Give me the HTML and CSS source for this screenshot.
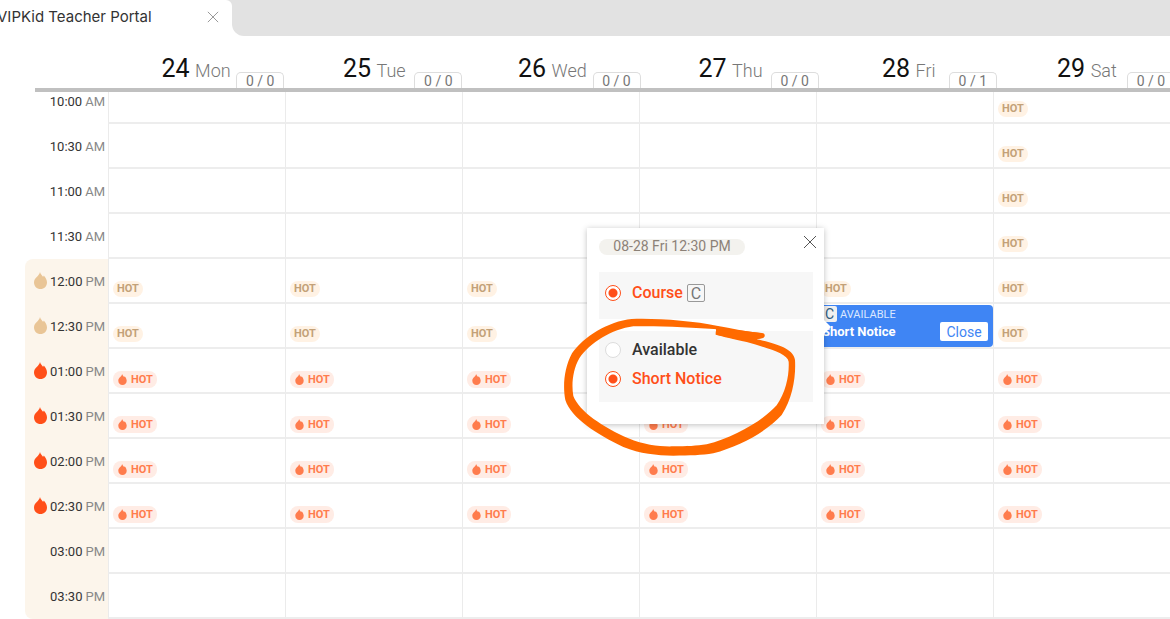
FILE: index.html
```
<!DOCTYPE html>
<html lang="en">
<head>
    <meta charset="UTF-8">
    <meta name="viewport" content="width=device-width, initial-scale=1.0">
    <title>VIPKid Teacher Portal</title>
    <link rel="stylesheet" href="styles.css">
</head>
<body>

    <svg class="symbols" aria-hidden="true">
        <symbol id="flame" viewBox="0 0 13 17">
            <path d="M6 0C6.3 1.6 7.6 2.8 9 4.8C9.5 4.4 9.7 4 9.8 3.4C11.8 5.6 13 8 13 10.5C13 14.3 10.2 17 6.5 17S0 14.3 0 10.5C0 8 1.2 6.6 3 4.8C4.4 3.4 5.5 2 6 0Z"/>
        </symbol>
        <symbol id="cross" viewBox="0 0 14 14">
            <path d="M1 1L13 13M13 1L1 13" fill="none" stroke="currentColor"/>
        </symbol>
    </svg>

    <div class="tab-bar">
        <div class="tab">
            <a href="#">VIPKid Teacher Portal</a>
            <button class="tab-close" aria-label="Close tab"><svg><use href="#cross"/></svg></button>
        </div>
        <div class="tab-strip"></div>
    </div>

    <div class="days">
        <div class="day"><b>24</b> <span>Mon</span><em>0 / 0</em></div>
        <div class="day"><b>25</b> <span>Tue</span><em>0 / 0</em></div>
        <div class="day"><b>26</b> <span>Wed</span><em>0 / 0</em></div>
        <div class="day"><b>27</b> <span>Thu</span><em>0 / 0</em></div>
        <div class="day"><b>28</b> <span>Fri</span><em>0 / 1</em></div>
        <div class="day"><b>29</b> <span>Sat</span><em>0 / 0</em></div>
    </div>

    <table class="calendar">
        <tbody>
            <tr>
                <th scope="row"><div class="time">10:00 <span>AM</span></div></th>
                <td></td><td></td><td></td><td></td><td></td>
                <td><span class="hot">HOT</span></td>
            </tr>
            <tr>
                <th scope="row"><div class="time">10:30 <span>AM</span></div></th>
                <td></td><td></td><td></td><td></td><td></td>
                <td><span class="hot">HOT</span></td>
            </tr>
            <tr>
                <th scope="row"><div class="time">11:00 <span>AM</span></div></th>
                <td></td><td></td><td></td><td></td><td></td>
                <td><span class="hot">HOT</span></td>
            </tr>
            <tr>
                <th scope="row"><div class="time">11:30 <span>AM</span></div></th>
                <td></td><td></td><td></td><td></td><td></td>
                <td><span class="hot">HOT</span></td>
            </tr>
            <!-- peak hours -->
            <tr class="peak peak-first">
                <th scope="row"><div class="time"><svg class="warm"><use href="#flame"/></svg>12:00 <span>PM</span></div></th>
                <td><span class="hot">HOT</span></td>
                <td><span class="hot">HOT</span></td>
                <td><span class="hot">HOT</span></td>
                <td></td>
                <td><span class="hot">HOT</span></td>
                <td><span class="hot">HOT</span></td>
            </tr>
            <tr class="peak">
                <th scope="row"><div class="time"><svg class="warm"><use href="#flame"/></svg>12:30 <span>PM</span></div></th>
                <td><span class="hot">HOT</span></td>
                <td><span class="hot">HOT</span></td>
                <td><span class="hot">HOT</span></td>
                <td></td>
                <td class="booked">
                    <div class="event">
                        <div class="event-status"><i>C</i> AVAILABLE</div>
                        <div class="event-row">
                            <strong>Short Notice</strong>
                            <button class="event-close">Close</button>
                        </div>
                    </div>

                    <div class="popover">
                        <div class="popover-head">
                            <span class="slot"><span>08-28 Fri 12:30 PM</span></span>
                            <button class="popover-close" aria-label="Close"><svg><use href="#cross"/></svg></button>
                        </div>
                        <div class="options">
                            <label><input type="radio" name="type" checked>Course <i>C</i></label>
                        </div>
                        <div class="options options-status">
                            <label><input type="radio" name="status">Available</label>
                            <label><input type="radio" name="status" checked>Short Notice</label>
                        </div>
                        <svg class="marker" viewBox="30 15 720 432" aria-hidden="true">
                            <path fill-rule="evenodd" d="M500 47C430 33 320 24 245 27C175 34 100 80 66 130C42 175 38 230 46 270C64 325 140 372 220 411C270 432 320 436 370 437C420 437 455 436 490 430C570 408 650 365 695 315C728 265 738 200 735 150C732 120 690 102 620 88L636 85C647 83 647 69 636 69C590 66 545 54 500 47Z
                                M497 74C497 60 500 58 503 58C430 52 320 47 250 49C185 58 120 98 88 145C68 180 64 225 70 258C88 305 160 352 235 385C285 406 330 410 370 409C410 409 440 408 470 403C550 382 635 335 680 286C708 245 718 195 716 155C712 130 650 114 590 96C550 87 520 80 497 74Z"/>
                            <path d="M497 56L503 75L590 94L636 84V70L560 60Z"/>
                        </svg>
                    </div>
                </td>
                <td><span class="hot">HOT</span></td>
            </tr>
            <tr class="peak">
                <th scope="row"><div class="time"><svg><use href="#flame"/></svg>01:00 <span>PM</span></div></th>
                <td><span class="hot fire"><svg><use href="#flame"/></svg>HOT</span></td>
                <td><span class="hot fire"><svg><use href="#flame"/></svg>HOT</span></td>
                <td><span class="hot fire"><svg><use href="#flame"/></svg>HOT</span></td>
                <td></td>
                <td><span class="hot fire"><svg><use href="#flame"/></svg>HOT</span></td>
                <td><span class="hot fire"><svg><use href="#flame"/></svg>HOT</span></td>
            </tr>
            <tr class="peak">
                <th scope="row"><div class="time"><svg><use href="#flame"/></svg>01:30 <span>PM</span></div></th>
                <td><span class="hot fire"><svg><use href="#flame"/></svg>HOT</span></td>
                <td><span class="hot fire"><svg><use href="#flame"/></svg>HOT</span></td>
                <td><span class="hot fire"><svg><use href="#flame"/></svg>HOT</span></td>
                <td><span class="hot fire"><svg><use href="#flame"/></svg>HOT</span></td>
                <td><span class="hot fire"><svg><use href="#flame"/></svg>HOT</span></td>
                <td><span class="hot fire"><svg><use href="#flame"/></svg>HOT</span></td>
            </tr>
            <tr class="peak">
                <th scope="row"><div class="time"><svg><use href="#flame"/></svg>02:00 <span>PM</span></div></th>
                <td><span class="hot fire"><svg><use href="#flame"/></svg>HOT</span></td>
                <td><span class="hot fire"><svg><use href="#flame"/></svg>HOT</span></td>
                <td><span class="hot fire"><svg><use href="#flame"/></svg>HOT</span></td>
                <td><span class="hot fire"><svg><use href="#flame"/></svg>HOT</span></td>
                <td><span class="hot fire"><svg><use href="#flame"/></svg>HOT</span></td>
                <td><span class="hot fire"><svg><use href="#flame"/></svg>HOT</span></td>
            </tr>
            <tr class="peak">
                <th scope="row"><div class="time"><svg><use href="#flame"/></svg>02:30 <span>PM</span></div></th>
                <td><span class="hot fire"><svg><use href="#flame"/></svg>HOT</span></td>
                <td><span class="hot fire"><svg><use href="#flame"/></svg>HOT</span></td>
                <td><span class="hot fire"><svg><use href="#flame"/></svg>HOT</span></td>
                <td><span class="hot fire"><svg><use href="#flame"/></svg>HOT</span></td>
                <td><span class="hot fire"><svg><use href="#flame"/></svg>HOT</span></td>
                <td><span class="hot fire"><svg><use href="#flame"/></svg>HOT</span></td>
            </tr>
            <tr class="peak">
                <th scope="row"><div class="time">03:00 <span>PM</span></div></th>
                <td></td><td></td><td></td><td></td><td></td><td></td>
            </tr>
            <tr class="peak peak-last">
                <th scope="row"><div class="time">03:30 <span>PM</span></div></th>
                <td></td><td></td><td></td><td></td><td></td><td></td>
            </tr>
        </tbody>
    </table>

</body>
</html>
```
FILE: styles.css
```
* {
    box-sizing: border-box;
}

body {
    margin: 0;
    font-family: Roboto, "Liberation Sans", sans-serif;
    font-size: 14px;
    color: #333;
    background: #fff;
    overflow-x: hidden;
}

button {
    font-family: inherit;
    border: none;
    background: none;
    padding: 0;
    cursor: pointer;
}

svg {
    display: block;
    fill: currentColor;
}

.symbols {
    display: none;
}

/* browser tab */
.tab-bar {
    display: flex;
    height: 36px;
    background: linear-gradient(#e2e2e2 50%, #fff 50%);
}

.tab {
    width: 232px;
    display: flex;
    align-items: center;
    justify-content: space-between;
    padding: 0 13px 3px 0;
    background: #fff;
    border-top-right-radius: 6px;
}

.tab a {
    margin-left: -3px;
    font-family: Inter, sans-serif;
    font-size: 15px;
    color: #333;
    text-decoration: none;
    white-space: nowrap;
}

.tab-close {
    color: #888;
}

.tab-close svg {
    width: 12px;
    height: 12px;
}

.tab-strip {
    flex: 1;
    background: #e2e2e2;
    border-bottom-left-radius: 12px;
}

/* day names */
.days {
    position: relative;
    z-index: 1;
    display: grid;
    grid-template-columns: repeat(6, 1fr);
    height: 56px;
    margin: 0 -6px 0 35px;
    padding-left: 72px;
    border-bottom: 4px solid #c0c0c0;
    background: #fff;
}

.day {
    position: relative;
    padding-top: 17px;
    text-align: center;
    line-height: 32px;
}

.day b {
    margin-right: 2px;
    font-size: 25px;
    font-weight: 400;
    color: #111;
}

.day span {
    font-size: 18px;
    font-weight: 300;
    color: #777;
}

.day em {
    position: absolute;
    right: 1px;
    bottom: 0;
    width: 48px;
    height: 16px;
    border: 1px solid #ddd;
    border-bottom: none;
    border-radius: 5px 5px 0 0;
    font-style: normal;
    line-height: 17px;
    color: #777;
}

/* first row is scrolled partly under the day names */
.calendar {
    width: 100%;
    margin-top: -13px;
    table-layout: fixed;
    border-spacing: 0;
}

.calendar th {
    width: 108px;
    height: 45px;
    padding: 0 0 0 25px;
    font-weight: 400;
}

.calendar td {
    height: 45px;
    padding: 8px 0 0 4px;
    border-left: 1px solid #ebebeb;
    border-bottom: 2px solid #ededed;
}

.time {
    display: flex;
    align-items: center;
    justify-content: flex-end;
    gap: 3px;
    height: 45px;
    padding-right: 3px;
    font-size: 13px;
}

.time span {
    color: #888;
}

.time svg {
    width: 13px;
    height: 17px;
    margin-bottom: 2px;
    color: #ff4f19;
}

.time .warm {
    color: #e9c596;
}

.peak .time {
    background: #fcf5eb;
}

.peak-first .time {
    border-top-left-radius: 8px;
}

.peak-last .time {
    border-bottom-left-radius: 8px;
}

.hot {
    display: flex;
    align-items: center;
    gap: 4px;
    width: fit-content;
    height: 16px;
    margin-top: 8px;
    padding: 0 4px;
    border-radius: 8px;
    background: #fff2e4;
    color: #c3a178;
    font-size: 11px;
    font-weight: 700;
}

.fire {
    height: 17px;
    margin-top: 10px;
    padding-left: 5px;
    background: #ffece5;
    color: #ff7c4d;
}

.fire svg {
    width: 9px;
    height: 11px;
}

/* booked slot */
.calendar .booked {
    position: relative;
    padding: 1px 0 0;
}

.event {
    height: 42px;
    padding: 1px 5px 0;
    border-radius: 4px;
    background: #3f85f4;
    color: #fff;
}

.event-status {
    display: flex;
    align-items: center;
    gap: 3px;
    font-size: 11px;
    color: #dbe8ff;
}

.event-status i {
    width: 15px;
    height: 16px;
    border-radius: 2px;
    background: #f0f0f0;
    color: #2f5d80;
    font-size: 14px;
    font-style: normal;
    line-height: 17px;
    text-align: center;
}

.event-row {
    display: flex;
    align-items: center;
    justify-content: space-between;
}

.event-row strong {
    font-size: 13px;
    font-weight: 700;
}

.event-close {
    width: 48px;
    height: 19px;
    border-radius: 2px;
    background: #fff;
    color: #3f85f4;
    font-size: 14px;
}

.popover {
    position: absolute;
    z-index: 2;
    top: -76px;
    right: calc(100% - 7px);
    width: 237px;
    height: 196px;
    padding: 7px 11px 0 12px;
    background: #fff;
    box-shadow: 0 1px 6px rgba(0, 0, 0, 0.25);
}

.popover::after {
    content: "";
    position: absolute;
    top: 92px;
    left: 100%;
    border: 7px solid transparent;
    border-left-color: #fff;
    border-right: none;
}

.popover-head {
    display: flex;
    align-items: flex-start;
    justify-content: space-between;
    height: 37px;
    margin-right: -4px;
}

.slot {
    width: 146px;
    height: 16px;
    margin-top: 4px;
    border-radius: 8px;
    background: #f3f2ee;
    color: #8c8177;
    line-height: 14px;
    text-align: center;
}

.popover-close {
    color: #555;
}

.popover-close svg {
    width: 14px;
    height: 14px;
}

.options {
    height: 47px;
    padding: 6px;
    background: #f7f7f7;
}

.options-status {
    height: 71px;
    margin-top: 12px;
    padding: 4px 6px;
}

.options label {
    display: flex;
    align-items: center;
    height: 29px;
    font-size: 16px;
    font-weight: 500;
}

.options label:has(:checked) {
    color: #ff4f19;
}

.options input {
    appearance: none;
    width: 16px;
    height: 16px;
    margin: 0 11px 0 0;
    border: 1px solid #ddd;
    border-radius: 50%;
    background: #fff;
}

.options input:checked {
    border-color: #ff4f19;
    background: radial-gradient(#ff4f19 4px, #fff 5px);
}

.options i {
    width: 18px;
    height: 18px;
    margin-left: 4px;
    border: 1px solid #999;
    border-radius: 2px;
    color: #777;
    font-style: normal;
    font-weight: 400;
    line-height: 17px;
    text-align: center;
}

/* hand drawn ring round the status options */
.marker {
    position: absolute;
    top: 87px;
    left: -27px;
    width: 240px;
    height: 144px;
    color: #ff6a00;
    pointer-events: none;
}
```
